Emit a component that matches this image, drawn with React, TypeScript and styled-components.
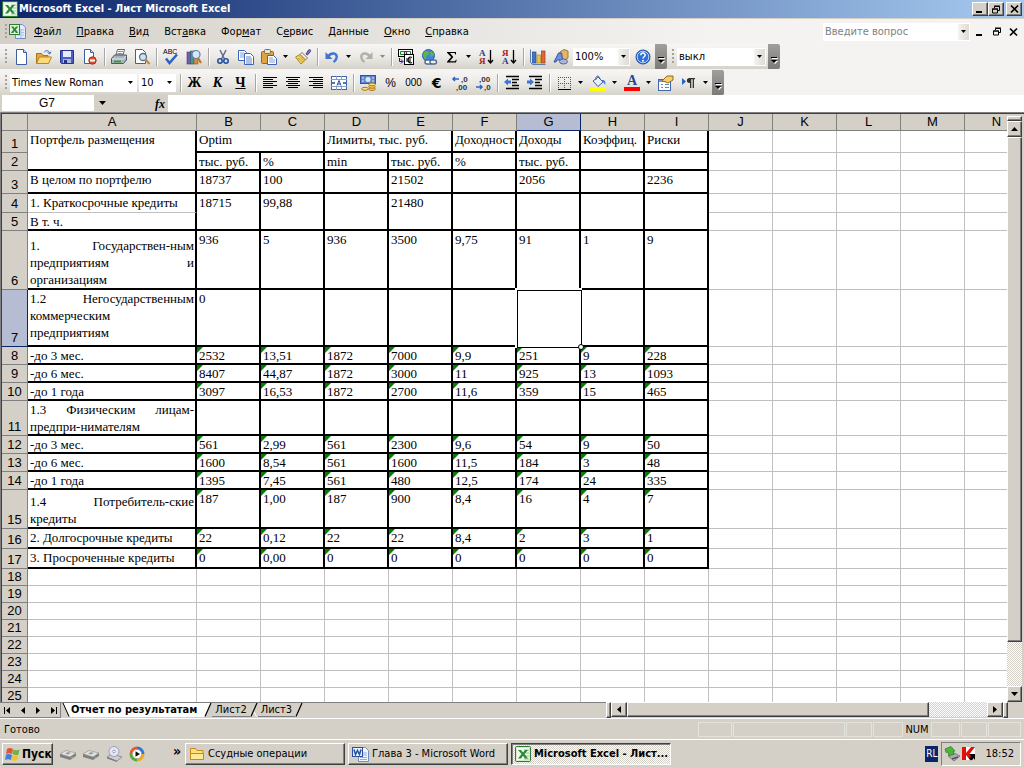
import React from 'react';
import styled, { createGlobalStyle, css } from 'styled-components';

const face = '#d4d0c8';
const shade = '#808080';
const dark = '#404040';
const navy = '#0a246a';
const ui = '"DejaVu Sans Condensed", "DejaVu Sans", sans-serif';

const Global = createGlobalStyle`
  *, *::before, *::after { box-sizing: border-box; }
  body { margin: 0; background: ${face}; }
  button, input, select { font: inherit; color: inherit; margin: 0; border-radius: 0; }
`;

const raised = css`
  border: 1px solid;
  border-color: #fff ${dark} ${dark} #fff;
  box-shadow: inset -1px -1px 0 ${shade};
`;

const dither = css`
  background: conic-gradient(#fff 25%, ${face} 0 50%, #fff 0 75%, ${face} 0) 0 0 / 2px 2px;
`;

const Window = styled.div`
  height: 100vh;
  display: flex;
  flex-direction: column;
  overflow: hidden;
  font: 11px/14px ${ui};
  color: #000;
  background: ${face};
`;

/* title bar */
const TitleBar = styled.header`
  flex: none;
  height: 19px;
  display: flex;
  align-items: center;
  padding: 0 2px;
  border-bottom: 1px solid ${face};
  background: linear-gradient(90deg, ${navy}, #a6caf0);
  color: #fff;
`;
const Title = styled.h1`
  flex: 1;
  margin: 0 0 0 1px;
  font: bold 11px/16px ${ui};
  white-space: nowrap;
`;
const CaptionButton = styled.button<{ $gap?: boolean }>`
  ${raised}
  width: 16px;
  height: 14px;
  padding: 0;
  margin-left: ${(p) => (p.$gap ? '2px' : '0')};
  background: ${face};
  display: grid;
  place-items: center;
  color: #000;
`;

/* menu bar */
const MenuBar = styled.nav`
  flex: none;
  height: 25px;
  display: flex;
  align-items: center;
  padding: 0 2px 0 5px;
  background: linear-gradient(90deg, ${face}, #f4f3f1 70%);
`;
const MenuItems = styled.div`
  flex: 1;
  display: flex;
`;
const MenuItem = styled.button`
  border: 0;
  background: none;
  padding: 0 7px 0 8px;
  line-height: 18px;
  white-space: nowrap;
`;
const DocButton = styled.button`
  border: 0;
  background: none;
  padding: 0;
  width: 17px;
  height: 16px;
  display: grid;
  place-items: center;
`;
const Question = styled.div`
  width: 147px;
  height: 18px;
  display: flex;
  background: #fff;
  margin-right: 1px;
`;
const QuestionInput = styled.input`
  flex: 1;
  min-width: 0;
  border: 0;
  padding: 0 2px;
  background: none;
  outline: 0;
  &::placeholder { color: #808080; opacity: 1; }
`;

/* toolbars */
const Strip = styled.div`
  flex: none;
  display: flex;
  background: #f4f3f1;
`;
const Bar = styled.div`
  height: 25px;
  margin-bottom: 1px;
  padding-left: 5px;
  display: flex;
  align-items: center;
  background: linear-gradient(#f7f6f4, #eceae6 50%, #d5d2ca);
`;
const LowerStrip = styled(Strip)`
  ${Bar} { margin-bottom: 0; }
`;
const Grip = styled.span`
  flex: none;
  width: 3px;
  height: 15px;
  margin-right: 1px;
  background: linear-gradient(#a5a29b 2px, transparent 0) 0 0 / 2px 4px repeat-y;
`;
const toolFonts = {
  bold: css`font: bold 14px/18px 'Liberation Serif', serif;`,
  italic: css`font: italic bold 14px/18px 'Liberation Serif', serif;`,
  under: css`font: bold 14px/18px 'Liberation Serif', serif; text-decoration: underline;`,
  plain: css`font: 12px/18px 'Liberation Sans', sans-serif;`,
  small: css`font: 10px/18px 'Liberation Sans', sans-serif;`,
  euro: css`font: bold 14px/18px 'DejaVu Sans', sans-serif;`,
};
const Tool = styled.button<{ $text?: keyof typeof toolFonts }>`
  flex: none;
  width: 23px;
  height: 22px;
  border: 0;
  padding: 0;
  background: none;
  display: grid;
  place-items: center;
  white-space: nowrap;
  ${(p) => p.$text && toolFonts[p.$text]}
`;
const DropButton = styled.button`
  flex: none;
  width: 11px;
  height: 22px;
  border: 0;
  padding: 0;
  background: none;
  display: grid;
  place-items: center;
`;
const Rule = styled.span`
  flex: none;
  width: 2px;
  height: 18px;
  margin: 0 1px 0 3px;
  border-left: 1px solid #a6a6a6;
  border-right: 1px solid #fff;
`;
const Combo = styled.span<{ $w: number }>`
  flex: none;
  width: ${(p) => p.$w}px;
  height: 18px;
  margin: 0 1px;
  display: flex;
  background: #fff;
`;
const ComboSelect = styled.select`
  flex: 1;
  min-width: 0;
  appearance: none;
  border: 0;
  padding: 0 2px;
  background: none;
  outline: 0;
`;
const ComboArrow = styled.span<{ $flat?: boolean }>`
  width: 11px;
  margin: 1px;
  display: grid;
  place-items: center;
  background: ${(p) => (p.$flat ? '#fff' : 'linear-gradient(90deg, #f4f3f1, #dedbd5)')};
  pointer-events: none;
`;
const Cap = styled.button`
  flex: none;
  align-self: stretch;
  width: 12px;
  margin-left: 1px;
  border: 0;
  padding: 0 0 4px;
  border-radius: 0 2px 2px 0;
  background: linear-gradient(#a09f9d, #7d7b78);
  display: flex;
  align-items: flex-end;
  justify-content: center;
`;

/* formula bar */
const FormulaBar = styled.div`
  flex: none;
  height: 17px;
  display: flex;
  padding-left: 2px;
  background: ${face};
`;
const NameBox = styled.input`
  width: 92px;
  height: 16px;
  border: 0;
  padding: 0 2px 0 0;
  text-align: center;
  font: 12px/16px 'Liberation Sans', sans-serif;
`;
const NameDrop = styled(DropButton)`
  width: 16px;
  height: 16px;
`;
const FxButton = styled.button`
  width: 20px;
  margin-left: 38px;
  border: 0;
  padding: 0 0 0 4px;
  background: none;
  font: italic bold 12px/14px 'Liberation Serif', serif;
`;
const Formula = styled.input`
  flex: 1;
  min-width: 0;
  border: 0;
  padding: 0 2px;
  background: #fff;
`;

/* worksheet */
const SheetArea = styled.main`
  flex: 1;
  min-height: 0;
  display: flex;
  border-top: 1px solid ${shade};
  border-left: 1px solid ${shade};
`;
const Pane = styled.div`
  flex: 1;
  min-width: 0;
  overflow: hidden;
  border-top: 1px solid ${dark};
  border-left: 1px solid ${dark};
  background: #fff;
`;
const Sheet = styled.table`
  table-layout: fixed;
  width: 100%;
  border-collapse: separate;
  border-spacing: 0;
`;
const Col = styled.col<{ $w: number }>`
  width: ${(p) => p.$w}px;
`;
const Row = styled.tr<{ $h: number }>`
  height: ${(p) => p.$h}px;
`;
const Head = styled.th<{ $on?: boolean }>`
  padding: 0;
  border: 0 solid ${(p) => (p.$on ? navy : shade)};
  border-width: 0 1px 1px 0;
  background: ${(p) => (p.$on ? '#b6bdd2' : face)};
  font: 13px/16px 'Liberation Sans', sans-serif;
  text-align: center;
  vertical-align: bottom;
`;
const Cell = styled.td<{ $right: boolean; $bottom: boolean; $low?: boolean; $flag?: boolean }>`
  position: relative;
  padding: 0 1px 0 2px;
  border: 0 solid;
  border-width: 0 ${(p) => (p.$right ? 2 : 1)}px ${(p) => (p.$bottom ? 2 : 1)}px 0;
  border-color: #000 ${(p) => (p.$right ? '#000' : '#c0c0c0')} ${(p) => (p.$bottom ? '#000' : '#c0c0c0')} #000;
  font: 13px/17px 'Liberation Serif', serif;
  vertical-align: ${(p) => (p.$low ? 'bottom' : 'top')};
  ${(p) =>
    p.$flag &&
    css`
      &::before {
        content: '';
        position: absolute;
        left: 0;
        top: 0;
        border: 3px solid;
        border-color: #008000 transparent transparent #008000;
      }
    `}
`;
const Value = styled.div`
  position: relative;
  height: 16px;
  white-space: nowrap;
`;
const Lines = styled.div<{ $low?: boolean }>`
  margin-bottom: ${(p) => (p.$low ? '0' : '-1px')};
`;
const Line = styled.div`
  white-space: nowrap;
  text-align: justify;
  &:not(:last-child) { text-align-last: justify; white-space: normal; }
`;
const Selection = styled.div`
  position: absolute;
  z-index: 1;
  inset: -2px -3px -3px -2px;
  border: 2px solid #fff;
  border-width: 2px 0 0 2px;
  background: #fff;
  &::before {
    content: '';
    position: absolute;
    inset: 0;
    border: 1px solid #000;
  }
  &::after {
    content: '';
    position: absolute;
    right: -2px;
    bottom: -2px;
    width: 6px;
    height: 6px;
    border: 1px solid #000;
    border-radius: 3px;
    background: #fff;
  }
`;

/* scroll bars */
const VScroll = styled.div`
  flex: none;
  width: 17px;
  padding: 2px 2px 0 0;
  display: flex;
  flex-direction: column;
  border-top: 1px solid ${dark};
  background: ${face};
`;
const VSplit = styled.div`
  ${raised}
  height: 5px;
`;
const ScrollButton = styled.button`
  ${raised}
  flex: none;
  width: 15px;
  height: 16px;
  padding: 0;
  background: ${face};
  display: grid;
  place-items: center;
`;
const VTrack = styled.div`
  ${dither}
  flex: 1;
  display: flex;
`;
const VThumb = styled.div`
  ${raised}
  flex: 1;
  height: 92%;
  background: ${face};
`;
const TabRow = styled.div`
  flex: none;
  height: 16px;
  display: flex;
  padding-right: 16px;
  background: ${face};
`;
const TabSide = styled.div`
  flex: 0 1 606px;
  min-width: 320px;
  display: flex;
  border-top: 1px solid ${shade};
`;
const NavButton = styled.button`
  width: 15px;
  border: 0;
  border-bottom: 1px solid ${shade};
  padding: 0;
  background: none;
  display: grid;
  place-items: center;
`;
const NavEnd = styled.span`
  width: 2px;
  border-left: 1px solid ${shade};
`;
const SheetTab = styled.button<{ $on?: boolean }>`
  height: 14px;
  border: 0;
  border-bottom: ${(p) => (p.$on ? '0' : `1px solid ${shade}`)};
  padding: ${(p) => (p.$on ? '0 7px 0 1px' : '0 3px')};
  background: ${(p) => (p.$on ? '#fff' : face)};
  font: ${(p) => (p.$on ? 'bold' : 'normal')} 11px/14px ${ui};
  white-space: nowrap;
`;
const HScroll = styled.div`
  flex: 1;
  display: flex;
`;
const HSplit = styled.div`
  ${raised}
  width: 5px;
`;
const HButton = styled(ScrollButton)`
  width: 16px;
  height: 15px;
`;
const HTrack = styled.div`
  ${dither}
  flex: 1;
  height: 15px;
`;
const HThumb = styled.div`
  ${raised}
  width: 84%;
  height: 15px;
  background: ${face};
`;

/* status bar */
const StatusBar = styled.footer`
  flex: none;
  height: 21px;
  display: flex;
  align-items: center;
  gap: 1px;
  padding: 1px 3px 0 4px;
  border-top: 1px solid #fff;
`;
const StatusText = styled.span`
  flex: 1;
`;
const StatusBox = styled.span<{ $w: number; $plain?: boolean }>`
  width: ${(p) => p.$w}px;
  height: 15px;
  border: 1px solid ${(p) => (p.$plain ? 'transparent' : '#e4e2dd')};
  text-align: center;
  line-height: 14px;
`;

/* taskbar */
const TaskBar = styled.div`
  flex: none;
  height: 29px;
  display: flex;
  align-items: center;
  padding: 0 3px 0 2px;
  border-top: 1px solid #fff;
`;
const TaskButton = styled.button<{ $on?: boolean }>`
  ${raised}
  width: 160px;
  height: 22px;
  margin-right: 3px;
  padding: 0 3px;
  display: flex;
  align-items: center;
  gap: 3px;
  background: ${face};
  white-space: nowrap;
  overflow: hidden;
  ${(p) =>
    p.$on &&
    css`
      ${dither}
      font-weight: bold;
      border-color: ${dark} #fff #fff ${dark};
      box-shadow: inset 1px 1px 0 ${shade};
    `}
`;
const StartButton = styled(TaskButton)`
  width: 51px;
  padding: 0 2px;
  gap: 1px;
  margin-right: 3px;
  font-weight: bold;
  font-size: 12px;
`;
const Quick = styled.div`
  width: 129px;
  display: flex;
`;
const QuickButton = styled.button`
  width: 23px;
  height: 22px;
  border: 0;
  padding: 0;
  background: none;
  display: grid;
  place-items: center;
`;
const More = styled(QuickButton)`
  width: 16px;
  height: 16px;
  margin-left: auto;
  font: bold 14px/12px ${ui};
`;
const Lang = styled.span`
  width: 13px;
  height: 16px;
  margin: 0 3px 0 auto;
  background: ${navy};
  color: #fff;
  line-height: 16px;
  text-align: center;
  white-space: nowrap;
  font-size: 10px;
`;
const Tray = styled.div`
  height: 24px;
  display: flex;
  align-items: center;
  gap: 1px;
  padding: 0 6px 0 2px;
  border: 1px solid;
  border-color: ${shade} #fff #fff ${shade};
`;
const Clock = styled.time`
  margin-left: 7px;
`;

/* drawings */
const Svg = ({ w = 16, h = 16, vb, children }: { w?: number; h?: number; vb?: string; children: React.ReactNode }) => (
  <svg width={w} height={h} viewBox={vb ?? `0 0 ${w} ${h}`} overflow="visible" aria-hidden="true">
    {children}
  </svg>
);
const Tri = ({ dir = 'down', s = 5, c = '#000' }: { dir?: 'down' | 'up' | 'left' | 'right'; s?: number; c?: string }) => {
  const d = {
    down: 'M0 0h7L3.500 4z',
    up: 'M0 4h7L3.500 0z',
    left: 'M4 0v7L0 3.500z',
    right: 'M0 0v7L4 3.500z',
  }[dir];
  const flat = dir === 'down' || dir === 'up';
  const t = s > 5 ? 4 : 3;
  return (
    <svg width={flat ? s : t} height={flat ? t : s} viewBox={flat ? '0 0 7 4' : '0 0 4 7'} preserveAspectRatio="none" aria-hidden="true">
      <path d={d} fill={c} />
    </svg>
  );
};
const IMin = () => <Svg w={10} h={8}><path d="M1 6h6v2H1z" /></Svg>;
const IRestore = () => (
  <Svg w={10} h={9}>
    <path d="M3.500 3V1.500h5v4H7M3 1h6" fill="none" stroke="#000" />
    <path d="M1.500 4v4h5V4zM1 4h6" fill="none" stroke="#000" />
  </Svg>
);
const IClose = () => <Svg w={9} h={8}><path d="M1 .5l7 7M8 .5l-7 7" stroke="#000" strokeWidth="1.700" /></Svg>;

const IExcel = () => (
  <Svg>
    <rect x=".5" y=".5" width="15" height="15" rx="1" fill="#d3ebcd" stroke="#2f7d32" />
    <path d="M2 2h12v12H2z" fill="#f4fbf2" />
    <path d="M9 4h5M9 7h5M9 10h5M9 13h5" stroke="#8fc58d" />
    <path d="M3 4h3l2 2.500L10 4h3L9.500 8l3.500 4.500h-3L8 9.800 6 12.500H3L6.500 8z" fill="#2b8a35" />
  </Svg>
);
const IExcelDoc = () => (
  <Svg w={17} h={17}>
    <path d="M6.500 1.500h7l3 3v11h-10z" fill="#e3ecfb" stroke="#6f8fc4" />
    <path d="M8 7h7M8 9.500h7M8 12h7M12 6v9" stroke="#a9bfe4" />
    <rect x=".5" y="1.500" width="10" height="10" fill="#dff0da" stroke="#2f7d32" />
    <path d="M2 3.500h2.500L5.700 5.300 7 3.500h2.300L6.900 6.600 9.300 10H6.900L5.600 8 4.300 10H1.900l2.500-3.400z" fill="#2b8a35" />
  </Svg>
);
const INew = () => <Svg><path d="M3.500.5h7l3 3v12h-10z" fill="#fff" stroke="#3c5f9e" /><path d="M10.500.5v3h3" fill="#c9d9f2" stroke="#3c5f9e" /></Svg>;
const IOpen = () => (
  <Svg>
    <path d="M.5 14.500v-10h5l1.500 2h5v8z" fill="#e0a93c" stroke="#a8761a" />
    <path d="M.5 14.500l3-6.500h12l-3 6.500z" fill="#ffd97a" stroke="#b5852a" />
    <path d="M8 3.500c2-3 5-2 5.500.5m-2-.5l2.200 1.500L15 2.700" fill="none" stroke="#3a66b0" />
  </Svg>
);
const ISave = () => (
  <Svg>
    <path d="M1.500 1.500h13v13h-12l-1-1z" fill="#4a5fc4" stroke="#27338a" />
    <path d="M4 2h8v6H4z" fill="#e6ecfb" />
    <path d="M4 10h8v4H4z" fill="#aeb6dc" />
    <path d="M5 11h3v3H5z" fill="#27338a" />
  </Svg>
);
const IPerm = () => (
  <Svg>
    <path d="M2.500.5h6l3 3v11h-9z" fill="#fff" stroke="#3c5f9e" />
    <path d="M8.500.5v3h3" fill="#c9d9f2" stroke="#3c5f9e" />
    <circle cx="10.500" cy="11.500" r="3.700" fill="#e2502c" stroke="#b02a10" />
    <path d="M8 10.500h5v2H8z" fill="#fff" />
  </Svg>
);
const IPrint = () => (
  <Svg>
    <path d="M5 6l1.500-5.500h7L12 6z" fill="#fff" stroke="#667" />
    <path d="M7 2.500h5M6.500 4.500h5" stroke="#88a" />
    <path d="M.5 9.500L3.500 6h12v5l-3 3.500H.5z" fill="#a9b3bd" stroke="#4d5964" />
    <path d="M1 10h11.500L15 7" fill="none" stroke="#e4e8ec" />
    <path d="M3 12.500h7" stroke="#3a9b3a" strokeWidth="2" />
  </Svg>
);
const IPreview = () => (
  <Svg>
    <path d="M1.500.5h7l3 3v11h-10z" fill="#fff" stroke="#3c5f9e" />
    <circle cx="9" cy="8" r="3.500" fill="#cfe3f7" stroke="#5f6d80" strokeWidth="1.300" />
    <path d="M11.500 10.500l4 4.500" stroke="#c28a3a" strokeWidth="2.200" />
  </Svg>
);
const ISpell = () => (
  <Svg>
    <text x="0" y="5" fontSize="7" fontFamily="Liberation Sans, sans-serif">ABC</text>
    <path d="M3 9.500l3.500 4.500L14 5.500" fill="none" stroke="#2f62c0" strokeWidth="2.500" />
  </Svg>
);
const IBooks = () => (
  <Svg>
    <rect x="1" y="3" width="3.500" height="12" fill="#7a57b8" stroke="#4a3480" strokeWidth=".6" />
    <rect x="4.500" y="2" width="3.500" height="13" fill="#3f9a8f" stroke="#23625a" strokeWidth=".6" />
    <rect x="8" y="3" width="4" height="12" fill="#d98b3a" stroke="#97571a" strokeWidth=".6" />
    <circle cx="10" cy="5.500" r="4" fill="#d5e8fa" stroke="#5f7da8" strokeWidth="1.200" />
    <path d="M12 9l3 5" stroke="#b8752c" strokeWidth="2.200" />
  </Svg>
);
const ICut = () => (
  <Svg>
    <path d="M5 1l4.500 9M11 1L6.500 10" stroke="#5d6f8c" strokeWidth="1.500" />
    <circle cx="5" cy="12" r="2.200" fill="none" stroke="#2450a4" strokeWidth="1.600" />
    <circle cx="11" cy="12" r="2.200" fill="none" stroke="#2450a4" strokeWidth="1.600" />
  </Svg>
);
const ICopy = () => (
  <Svg>
    <path d="M.5 1.500h6l2 2v8h-8z" fill="#fff" stroke="#3b64b5" />
    <path d="M2 4h4M2 6h5M2 8h5" stroke="#7f9fd8" />
    <path d="M6.500 4.500h6l3 3v8h-9z" fill="#fff" stroke="#3b64b5" />
    <path d="M8 8h5M8 10h6M8 12h6M8 14h6" stroke="#5a84cc" />
  </Svg>
);
const IPaste = () => (
  <Svg>
    <rect x=".5" y="2.500" width="12" height="12" rx="1" fill="#dda445" stroke="#99671a" />
    <rect x="3.500" y=".5" width="6" height="4" rx="1" fill="#e9e4d6" stroke="#77705c" />
    <path d="M6.500 6.500h6l3 3v6h-9z" fill="#fff" stroke="#3b64b5" />
    <path d="M8 9h4M8 11h6M8 13h6" stroke="#7f9fd8" />
  </Svg>
);
const IBrush = () => (
  <Svg>
    <path d="M11 5l2.500-4c1.500-1 2.500 0 2 1.500L12.500 6z" fill="#7f6fc0" stroke="#4f4488" />
    <path d="M7 3.500L12.500 9l-2 2-5.500-5.500z" fill="#f0ead8" stroke="#837b62" />
    <path d="M5 5.500L.5 8 6 15l4.500-4z" fill="#f1d56a" stroke="#a88a22" />
    <path d="M3 9l5 4M4.500 7.500l4.500 4" stroke="#c4a23a" />
  </Svg>
);
const IUndo = () => <Svg><path d="M4 8C7 2.500 14 4 12.500 9c-.5 2-2 3.500-3 4" fill="none" stroke="#3f74d0" strokeWidth="2.500" /><path d="M1.500 3v7h7z" fill="#3f74d0" /></Svg>;
const IRedo = () => <Svg><path d="M12 8C9 2.500 2 4 3.500 9c.5 2 2 3.500 3 4" fill="none" stroke="#b3b0aa" strokeWidth="2.500" /><path d="M14.500 3v7h-7z" fill="#b3b0aa" /></Svg>;
const IEuro = () => (
  <Svg>
    <rect x=".5" y=".5" width="14" height="7" fill="#fff" stroke="#000" />
    <path d="M2.500 2.500h10v3h-10z" fill="none" stroke="#118a22" />
    <circle cx="7.500" cy="4" r="1.300" fill="#fff" stroke="#000" strokeWidth=".8" />
    <rect x="6.500" y="5.500" width="9" height="10" fill="#fff" stroke="#000" />
    <path d="M14 8.500c-4-2.500-6 5-1 5.500l1-.5M8 10h5M8 12h5" fill="none" stroke="#000" strokeWidth="1.200" />
    <path d="M1.500 9v3.500h3M3 10.500l2 2-2 2" fill="none" stroke="#1111c0" />
  </Svg>
);
const IGlobe = () => (
  <Svg>
    <circle cx="7.500" cy="6.500" r="6" fill="#3f86d8" stroke="#2a5fa8" />
    <path d="M3 3c2-2 5-1 5 1S5 6 5 9 2 8 2 6zM9 3c2-1 4 1 4 3l-3 2z" fill="#5fb548" />
    <rect x="4" y="11" width="7" height="4" rx="2" fill="#fff" stroke="#4d6a94" strokeWidth="1.400" />
    <rect x="9" y="11" width="6.500" height="4" rx="2" fill="#e8eef8" stroke="#4d6a94" strokeWidth="1.400" />
  </Svg>
);
const ISum = () => <Svg><path d="M3 3h9v2.500h-.8L10.600 4H6l3.300 4-3.600 4.300h5.400l.8-1.600h.8L12 13.500H3v-.7L7.200 8 3 3.700z" /></Svg>;
const ISort = ({ flip }: { flip?: boolean }) => (
  <Svg>
    <g fontFamily="Liberation Serif, serif" fontWeight="bold" fontSize="9">
      <text x="1" y="7" fill={flip ? '#a02020' : '#1b3f94'}>{flip ? 'Я' : 'А'}</text>
      <text x="1" y="15" fill={flip ? '#1b3f94' : '#a02020'}>{flip ? 'А' : 'Я'}</text>
    </g>
    <path d="M12.500 1v13M10 11l2.500 3 2.500-3" fill="none" stroke="#000" strokeWidth="1.300" />
  </Svg>
);
const IChart = () => (
  <Svg>
    <path d="M.5.5v13l2 2h13" fill="none" stroke="#5f7da8" />
    <rect x="2.500" y="3" width="3.500" height="11" fill="#3f74d0" stroke="#234a94" strokeWidth=".7" />
    <rect x="7" y="6" width="3.500" height="8" fill="#f2c63a" stroke="#a8861a" strokeWidth=".7" />
    <rect x="11.500" y="2" width="3.500" height="12" fill="#e0663a" stroke="#9a3a1a" strokeWidth=".7" />
  </Svg>
);
const IDraw = () => (
  <Svg>
    <path d="M7 3l4-2.500L15 2v7l-4 2.500L7 9z" fill="#e3b566" stroke="#a07a34" />
    <path d="M1 13L5.500 4h3L10 13H7.500L7 11H4l-1 2z" fill="#6f8fe0" stroke="#3552a8" />
    <ellipse cx="10.500" cy="12.500" rx="4" ry="2.500" fill="#a9b6dc" stroke="#5666a0" />
  </Svg>
);
const IHelp = () => (
  <Svg>
    <circle cx="8" cy="8" r="7" fill="#2f6fd6" stroke="#1c4aa0" />
    <circle cx="8" cy="8" r="5.800" fill="none" stroke="#bcd6fa" />
    <path d="M5.800 6.200c.2-3 4.600-2.600 4.400 0C10 7.800 8 7.800 8 9.600" fill="none" stroke="#fff" strokeWidth="1.500" />
    <circle cx="8" cy="11.700" r="1" fill="#fff" />
  </Svg>
);
const IAlign = ({ kind }: { kind: 'l' | 'c' | 'r' }) => {
  const x = { l: 1, c: 3, r: 5 }[kind];
  return (
    <Svg>
      <path d={`M1 2.500h14M${x} 4.500h10M1 6.500h14M${x} 8.500h10M1 10.500h14M${x} 12.500h10`} stroke="#000" />
    </Svg>
  );
};
const IMerge = () => (
  <Svg>
    <rect x=".5" y="1.500" width="15" height="13" fill="#fff" stroke="#3f66ac" />
    <path d="M0 4.500h16M0 11.500h16M5.500 1v3.500M10.500 1v3.500M5.500 11.500V15M10.500 11.500V15" stroke="#7f9fd0" />
    <path d="M1 8h3M15 8h-3" stroke="#234a94" strokeWidth="1.400" />
    <path d="M6 10.500l2-5 2 5M7 9h2" fill="none" stroke="#234a94" />
  </Svg>
);
const IMoney = () => (
  <Svg>
    <rect x=".5" y=".5" width="15" height="8" fill="#5f86d0" stroke="#2f56a4" />
    <circle cx="8" cy="4.500" r="2.500" fill="#dbe7fb" />
    <path d="M2 3h2M12 3h2M2 6h2M12 6h2" stroke="#dbe7fb" />
    <ellipse cx="12" cy="14" rx="3.300" ry="1.500" fill="#f7cf62" stroke="#a8761a" />
    <ellipse cx="12" cy="11.700" rx="3.300" ry="1.500" fill="#f7cf62" stroke="#a8761a" />
    <ellipse cx="12" cy="9.400" rx="3.300" ry="1.500" fill="#fbe08a" stroke="#a8761a" />
    <ellipse cx="5" cy="13.800" rx="3.300" ry="1.500" fill="#fbe08a" stroke="#a8761a" />
  </Svg>
);
const IDecimal = ({ less }: { less?: boolean }) => (
  <Svg>
    <g fontFamily="Liberation Sans, sans-serif" fontSize="8" fontWeight="bold" fill="#333">
      <text x={less ? 4 : 9} y="7">{less ? ',00' : ',0'}</text>
      <text x={less ? 9 : 4} y="15">{less ? ',0' : ',00'}</text>
    </g>
    <path d={less ? 'M1 12h6M5 10l2 2-2 2' : 'M1 4h6M3 2L1 4l2 2'} fill="none" stroke="#2f62c0" strokeWidth="1.500" />
  </Svg>
);
const IIndent = ({ out }: { out?: boolean }) => (
  <Svg>
    <path d="M2 1.500h13M8 4.500h7M8 7.500h5M8 10.500h7M2 13.500h13" stroke="#000" strokeWidth="1.300" />
    <path d={out ? 'M0 7l4-3.500v2h3v3H4v2z' : 'M7 7L3 3.500v2H0v3h3v2z'} fill="#3f74d0" />
  </Svg>
);
const IBorders = () => (
  <Svg>
    <path d="M2 2.500h13M2 8.500h13M2.500 2v12M8.500 2v12M14.500 2v12" stroke="#555" strokeDasharray="1 1" />
    <path d="M2 14.500h13" stroke="#000" />
  </Svg>
);
const IFill = () => (
  <Svg>
    <path d="M3 6l5-4 5 5-5 4.500z" fill="#e9eef8" stroke="#3f5f96" />
    <path d="M6 5c-1-4 3-6 4-1" fill="none" stroke="#3f5f96" />
    <path d="M12 5c3 0 4 2 3 5-1-2-1-3-3-3z" fill="#3f74d0" />
    <path d="M0 12h16v4H0z" fill="#ff0" />
  </Svg>
);
const IColor = () => (
  <Svg>
    <text x="3" y="10" fontFamily="Liberation Serif, serif" fontWeight="bold" fontSize="14" fill="#234a94">A</text>
    <path d="M0 12h16v4H0z" fill="red" />
  </Svg>
);
const IProps = () => (
  <Svg>
    <rect x=".5" y="4.500" width="12" height="11" fill="#fff" stroke="#3f66ac" />
    <path d="M1 5h11v2H1z" fill="#6f96dc" />
    <path d="M3 9.500h2M7 9.500h4M3 12.500h2M7 12.500h4" stroke="#5f86c8" />
    <path d="M4 6l5-5 6 0v4l-5 3-2-1z" fill="#f3cf6a" stroke="#94691c" />
  </Svg>
);
const IPara = () => (
  <Svg>
    <path d="M1 3v7l4-3.500z" fill="#2f62c0" />
    <path d="M8.500 8C5 8 5 3 8.500 3H14v1.200h-1V13h-1.300V4.200h-1.400V13H9V8z" fill="#333" />
  </Svg>
);
const ICap = () => (
  <Svg w={7} h={8}>
    <path d="M1 1h6v1H1zM1 4h6L4 7z" fill="#fff" />
    <path d="M0 0h6v1H0zM0 3h6L3 6z" fill="#000" />
  </Svg>
);
const INav = ({ dir, end }: { dir: 'left' | 'right'; end?: boolean }) => (
  <Svg w={8} h={7}>
    <path d={dir === 'left' ? 'M6 0v7L2 3.500z' : 'M2 0v7l4-3.500z'} />
    {end && <path d={dir === 'left' ? 'M0 0h1v7H0z' : 'M7 0h1v7H7z'} />}
  </Svg>
);
const Slant = ({ kind }: { kind: 'open' | 'split' | 'end' | 'mid' }) => (
  <Svg w={8} h={14} vb="0 0 8 14">
    {kind === 'open' && <><path d="M1 0h7v14z" fill="#fff" /><path d="M1 0l6 13.500" stroke="#000" /></>}
    {kind === 'split' && <path d="M0 0h7L1 14H0z" fill="#fff" />}
    {kind === 'mid' && <path d="M3.500 8l3 5.500" stroke="#fff" />}
    {kind !== 'open' && <path d="M7 0L1 13.500" stroke="#000" strokeWidth="1.200" />}
  </Svg>
);
const IFlag = () => (
  <Svg>
    <path d="M2 3c2-1.500 4-1 6 0L7 8C5 7 3 7 1 8z" fill="#e5552c" />
    <path d="M8.500 3.500c2 1 4 1 6 0l-1 5c-2 1-4 .5-6-.5z" fill="#6cb33f" />
    <path d="M1 8.700c2-1 4-.8 6 .3l-1 5c-2-1-4-1-6 0z" fill="#3f7fe0" />
    <path d="M7.500 9c2 1 4 1 6 0l-1 5c-2 1-4 1-6 0z" fill="#f5c22c" />
  </Svg>
);
const IDrive = () => (
  <Svg>
    <path d="M0 8l6-3.500L16 7l-6 4z" fill="#e2e2e2" stroke="#8a8a8a" strokeWidth=".6" />
    <path d="M0 8l10 3v3L0 11zM10 11l6-4v3l-6 4z" fill="#808080" />
    <path d="M5 7.500l3-1.500 3 1-3 1.500z" fill="#9a9a9a" />
    <circle cx="12" cy="11.200" r=".8" fill="#5fd05f" />
  </Svg>
);
const IDisc = () => (
  <Svg>
    <path d="M1 11l5-3 10 3-5 4z" fill="#d0d0d0" stroke="#777" strokeWidth=".7" />
    <path d="M1 11l10 4v1L1 12.500z" fill="#777" />
    <circle cx="8" cy="5.500" r="5" fill="#e4e6f6" stroke="#8a8fb0" strokeWidth=".8" />
    <circle cx="8" cy="5.500" r="1.300" fill="#fff" stroke="#8a8fb0" strokeWidth=".8" />
  </Svg>
);
const IPlayer = () => (
  <Svg>
    <path d="M8 .5A7.500 7.500 0 0 0 .5 8H8z" fill="#e85c2c" />
    <path d="M8 .5A7.500 7.500 0 0 1 15.500 8H8z" fill="#2f74d8" />
    <path d="M15.500 8A7.500 7.500 0 0 1 8 15.500V8z" fill="#f2a81c" />
    <path d="M8 15.500A7.500 7.500 0 0 1 .5 8H8z" fill="#57ab3a" />
    <circle cx="8" cy="8" r="4.600" fill="#fff" stroke="#999" strokeWidth=".6" />
    <path d="M6.500 5.200v5.600L11 8z" fill="#111" />
  </Svg>
);
const IFolder = () => (
  <Svg>
    <path d="M1.500 13.500v-11h5l1.500 2h6v9z" fill="#ffe07a" stroke="#c08a1c" />
    <path d="M1.500 13.500v-6h13v6z" fill="#ffe892" stroke="#c08a1c" />
  </Svg>
);
const IWord = () => (
  <Svg w={17} h={17}>
    <path d="M6.500 1.500h7l3 3v11h-10z" fill="#f2f7ff" stroke="#6f8fc4" />
    <path d="M11 7h4M11 9h4M8 11.500h7M8 13.500h7" stroke="#8fabdc" />
    <rect x=".5" y="1.500" width="10" height="9" fill="#e6eefc" stroke="#2a50a0" />
    <path d="M2 3.500l1.500 5 2-4 2 4 1.500-5" fill="none" stroke="#2a50a0" strokeWidth="1.500" />
  </Svg>
);
const IEject = () => (
  <Svg>
    <path d="M4 10l6-3 6 3-6 5z" fill="#a8aeb8" stroke="#666" strokeWidth=".7" />
    <path d="M8 13l6-2" stroke="#555" strokeWidth="1.500" />
    <path d="M1 3l6-2.500L11 5l-2 .5 1 3-5 1-1-3.500-2 .5z" fill="#4cb53a" stroke="#267a1c" strokeWidth=".7" />
  </Svg>
);
const IKasper = () => (
  <Svg>
    <path d="M1 1h13v13H1z" fill="#fff" />
    <path d="M1 1h4v6l5-6h4L8.500 8l4 6H9L5 9v5H1z" fill="#e01010" />
    <path d="M8 8l6 0v6l-1.700-1.700L10 14.500 8 12l2-1.700z" fill="#000" />
  </Svg>
);

/* data */
type CellData = { v?: string; lines?: string[]; low?: boolean; col?: number; row?: number; soft?: boolean };
type RowData = { h: number; a: CellData | null; cells: (string | CellData | null)[]; flag?: boolean };
const e = '';
const rows: RowData[] = [
  {
    h: 22,
    a: { v: 'Портфель размещения', row: 2 },
    cells: [{ v: 'Optim', col: 2 }, null, { v: 'Лимиты, тыс. руб.', col: 2 }, null, 'Доходност', 'Доходы', 'Коэффиц.', 'Риски'],
  },
  { h: 18, a: null, cells: ['тыс. руб.', '%', 'min', 'тыс. руб.', '%', 'тыс. руб.', e, e] },
  { h: 23, a: { v: 'В целом по портфелю' }, cells: ['18737', '100', e, '21502', e, '2056', e, '2236'] },
  {
    h: 19,
    a: { v: '1. Краткосрочные кредиты', soft: true },
    cells: ['18715', '99,88', e, '21480', e, e, e, e].map((v) => ({ v, row: 2 })),
  },
  { h: 18, a: { v: 'В т. ч.' }, cells: [null, null, null, null, null, null, null, null] },
  {
    h: 59,
    a: { lines: ['1. Государствен-ным', 'предприятиям и', 'организациям'], low: true },
    cells: ['936', '5', '936', '3500', '9,75', '91', '1', '9'],
  },
  { h: 57, a: { lines: ['1.2 Негосударственным', 'коммерческим', 'предприятиям'] }, cells: ['0', e, e, e, e, e, e, e] },
  { h: 18, flag: true, a: { v: '-до 3 мес.' }, cells: ['2532', '13,51', '1872', '7000', '9,9', '251', '9', '228'] },
  { h: 18, flag: true, a: { v: '-до 6 мес.' }, cells: ['8407', '44,87', '1872', '3000', '11', '925', '13', '1093'] },
  { h: 18, flag: true, a: { v: '-до 1 года' }, cells: ['3097', '16,53', '1872', '2700', '11,6', '359', '15', '465'] },
  { h: 35, a: { lines: ['1.3 Физическим лицам-', 'предпри-нимателям'] }, cells: [e, e, e, e, e, e, e, e] },
  { h: 18, flag: true, a: { v: '-до 3 мес.' }, cells: ['561', '2,99', '561', '2300', '9,6', '54', '9', '50'] },
  { h: 18, flag: true, a: { v: '-до 6 мес.' }, cells: ['1600', '8,54', '561', '1600', '11,5', '184', '3', '48'] },
  { h: 18, flag: true, a: { v: '-до 1 года' }, cells: ['1395', '7,45', '561', '480', '12,5', '174', '24', '335'] },
  {
    h: 39,
    flag: true,
    a: { lines: ['1.4 Потребитель-ские', 'кредиты'], low: true },
    cells: ['187', '1,00', '187', '900', '8,4', '16', '4', '7'],
  },
  { h: 20, flag: true, a: { v: '2. Долгосрочные кредиты' }, cells: ['22', '0,12', '22', '22', '8,4', '2', '3', '1'] },
  { h: 20, flag: true, a: { v: '3. Просроченные кредиты' }, cells: ['0', '0,00', '0', '0', '0', '0', '0', '0'] },
];
const letters = 'ABCDEFGHIJKLMN'.split('');
const blankRows = Array.from({ length: 8 }, (_, i) => i + 18);
const menus: [string, string, string][] = [
  ['', 'Ф', 'айл'], ['', 'П', 'равка'], ['', 'В', 'ид'], ['Вст', 'а', 'вка'], ['Фор', 'м', 'ат'],
  ['С', 'е', 'рвис'], ['', 'Д', 'анные'], ['', 'О', 'кно'], ['', 'С', 'правка'],
];

const T = ({ name, children }: { name: string; children: React.ReactNode }) => <Tool aria-label={name}>{children}</Tool>;
const Drop = ({ c }: { c?: string }) => <DropButton aria-label="Ещё"><Tri c={c} /></DropButton>;
const Pick = ({ name, w, value, flat }: { name: string; w: number; value: string; flat?: boolean }) => (
  <Combo $w={w}>
    <ComboSelect aria-label={name} defaultValue={value}><option>{value}</option></ComboSelect>
    <ComboArrow $flat={flat}><Tri /></ComboArrow>
  </Combo>
);

const DataRow = ({ data, n }: { data: RowData; n: number }) => (
  <Row $h={data.h}>
    <Head scope="row" $on={n === 7}>{n}</Head>
    {data.a && (
      <Cell $right $bottom={!data.a.soft} $low={data.a.low} rowSpan={data.a.row}>
        {data.a.lines ? (
          <Lines $low={data.a.low}>{data.a.lines.map((l) => <Line key={l}>{l}</Line>)}</Lines>
        ) : (
          <Value>{data.a.v}</Value>
        )}
      </Cell>
    )}
    {data.cells.map((c, i) => {
      if (c === null) return null;
      const d: CellData = typeof c === 'string' ? { v: c } : c;
      return (
        <Cell key={i} $right $bottom $flag={data.flag} colSpan={d.col} rowSpan={d.row}>
          <Value>{d.v}</Value>
          {n === 7 && i === 5 && <Selection />}
        </Cell>
      );
    })}
    {letters.slice(9).map((l) => <Cell key={l} $right={false} $bottom={false} />)}
  </Row>
);

export default function App() {
  return (
    <Window>
      <Global />
      <TitleBar>
        <IExcel />
        <Title>Microsoft Excel - Лист Microsoft Excel</Title>
        <CaptionButton aria-label="Свернуть"><IMin /></CaptionButton>
        <CaptionButton aria-label="Восстановить"><IRestore /></CaptionButton>
        <CaptionButton aria-label="Закрыть" $gap><IClose /></CaptionButton>
      </TitleBar>
      <MenuBar>
        <Grip />
        <IExcelDoc />
        <MenuItems>
          {menus.map(([a, u, b]) => <MenuItem key={a + u + b}>{a}<u>{u}</u>{b}</MenuItem>)}
        </MenuItems>
        <Question>
          <QuestionInput aria-label="Введите вопрос" placeholder="Введите вопрос" />
          <ComboArrow><Tri /></ComboArrow>
        </Question>
        <DocButton aria-label="Свернуть окно"><IMin /></DocButton>
        <DocButton aria-label="Восстановить окно"><IRestore /></DocButton>
        <DocButton aria-label="Закрыть окно"><IClose /></DocButton>
      </MenuBar>
      <Strip>
        <Bar>
          <Grip />
          <T name="Создать"><INew /></T>
          <T name="Открыть"><IOpen /></T>
          <T name="Сохранить"><ISave /></T>
          <T name="Разрешения"><IPerm /></T>
          <Rule />
          <T name="Печать"><IPrint /></T>
          <T name="Просмотр"><IPreview /></T>
          <Rule />
          <T name="Орфография"><ISpell /></T>
          <T name="Справочные материалы"><IBooks /></T>
          <Rule />
          <T name="Вырезать"><ICut /></T>
          <T name="Копировать"><ICopy /></T>
          <T name="Вставить"><IPaste /></T>
          <Drop />
          <T name="Формат по образцу"><IBrush /></T>
          <Rule />
          <T name="Отменить"><IUndo /></T>
          <Drop />
          <T name="Вернуть"><IRedo /></T>
          <Drop c="#8d8a84" />
          <Rule />
          <T name="Пересчет в евро"><IEuro /></T>
          <T name="Гиперссылка"><IGlobe /></T>
          <T name="Автосумма"><ISum /></T>
          <Drop />
          <T name="По возрастанию"><ISort /></T>
          <T name="По убыванию"><ISort flip /></T>
          <Rule />
          <T name="Мастер диаграмм"><IChart /></T>
          <T name="Рисование"><IDraw /></T>
          <Pick name="Масштаб" w={57} value="100%" />
          <T name="Справка"><IHelp /></T>
          <Cap aria-label="Параметры панели"><ICap /></Cap>
        </Bar>
        <Bar>
          <Grip />
          <Pick name="Режим" w={89} value="выкл" />
          <Cap aria-label="Параметры панели"><ICap /></Cap>
        </Bar>
      </Strip>
      <LowerStrip>
        <Bar>
          <Grip />
          <Pick name="Шрифт" w={127} value="Times New Roman" flat />
          <Pick name="Размер" w={37} value="10" flat />
          <Rule />
          <Tool $text="bold">Ж</Tool>
          <Tool $text="italic">К</Tool>
          <Tool $text="under">Ч</Tool>
          <Rule />
          <T name="По левому краю"><IAlign kind="l" /></T>
          <T name="По центру"><IAlign kind="c" /></T>
          <T name="По правому краю"><IAlign kind="r" /></T>
          <T name="Объединить"><IMerge /></T>
          <Rule />
          <T name="Денежный формат"><IMoney /></T>
          <Tool $text="plain">%</Tool>
          <Tool $text="small">000</Tool>
          <Tool $text="euro">€</Tool>
          <T name="Увеличить разрядность"><IDecimal /></T>
          <T name="Уменьшить разрядность"><IDecimal less /></T>
          <Rule />
          <T name="Уменьшить отступ"><IIndent out /></T>
          <T name="Увеличить отступ"><IIndent /></T>
          <Rule />
          <T name="Границы"><IBorders /></T>
          <Drop />
          <T name="Цвет заливки"><IFill /></T>
          <Drop />
          <T name="Цвет шрифта"><IColor /></T>
          <Drop />
          <T name="Свойства"><IProps /></T>
          <T name="Направление"><IPara /></T>
          <Drop />
          <Cap aria-label="Параметры панели"><ICap /></Cap>
        </Bar>
      </LowerStrip>
      <FormulaBar>
        <NameBox aria-label="Имя" defaultValue="G7" />
        <NameDrop aria-label="Список имен"><Tri s={7} /></NameDrop>
        <FxButton>fx</FxButton>
        <Formula aria-label="Строка формул" />
      </FormulaBar>
      <SheetArea>
        <Pane>
          <Sheet>
            <colgroup>
              <Col $w={26} />
              {letters.map((l) => <Col key={l} $w={l === 'A' ? 169 : 64} />)}
            </colgroup>
            <thead>
              <Row $h={17}>
                <Head aria-label="Выделить все" />
                {letters.map((l) => <Head key={l} scope="col" $on={l === 'G'}>{l}</Head>)}
              </Row>
            </thead>
            <tbody>
              {rows.map((r, i) => <DataRow key={i} data={r} n={i + 1} />)}
              {blankRows.map((n) => (
                <Row key={n} $h={17}>
                  <Head scope="row">{n}</Head>
                  {letters.map((l) => <Cell key={l} $right={false} $bottom={false} />)}
                </Row>
              ))}
            </tbody>
          </Sheet>
        </Pane>
        <VScroll>
          <VSplit />
          <ScrollButton aria-label="Вверх"><Tri dir="up" s={7} /></ScrollButton>
          <VTrack><VThumb /></VTrack>
          <ScrollButton aria-label="Вниз"><Tri s={7} /></ScrollButton>
        </VScroll>
      </SheetArea>
      <TabRow>
        <TabSide>
          <NavButton aria-label="Первый лист"><INav dir="left" end /></NavButton>
          <NavButton aria-label="Предыдущий лист"><INav dir="left" /></NavButton>
          <NavButton aria-label="Следующий лист"><INav dir="right" /></NavButton>
          <NavButton aria-label="Последний лист"><INav dir="right" end /></NavButton>
          <NavEnd />
          <Slant kind="open" />
          <SheetTab $on>Отчет по результатам</SheetTab>
          <Slant kind="split" />
          <SheetTab>Лист2</SheetTab>
          <Slant kind="mid" />
          <SheetTab>Лист3</SheetTab>
          <Slant kind="end" />
        </TabSide>
        <HScroll>
          <HSplit />
          <HButton aria-label="Влево"><Tri dir="left" s={7} /></HButton>
          <HTrack><HThumb /></HTrack>
          <HButton aria-label="Вправо"><Tri dir="right" s={7} /></HButton>
          <HSplit />
        </HScroll>
      </TabRow>
      <StatusBar>
        <StatusText>Готово</StatusText>
        <StatusBox $w={34} />
        <StatusBox $w={112} />
        <StatusBox $w={26} />
        <StatusBox $w={30} />
        <StatusBox $w={26} $plain>NUM</StatusBox>
        <StatusBox $w={29} />
        <StatusBox $w={26} />
        <StatusBox $w={33} />
      </StatusBar>
      <TaskBar>
        <StartButton><IFlag />Пуск</StartButton>
        <Quick>
          <QuickButton aria-label="Диск C"><IDrive /></QuickButton>
          <QuickButton aria-label="Диск D"><IDrive /></QuickButton>
          <QuickButton aria-label="Дисковод"><IDisc /></QuickButton>
          <QuickButton aria-label="Проигрыватель"><IPlayer /></QuickButton>
          <More>»</More>
        </Quick>
        <TaskButton><IFolder />Ссудные операции</TaskButton>
        <TaskButton><IWord />Глава 3 - Microsoft Word</TaskButton>
        <TaskButton $on><IExcel />Microsoft Excel - Лист...</TaskButton>
        <Lang>RL</Lang>
        <Tray>
          <IEject />
          <IKasper />
          <Clock>18:52</Clock>
        </Tray>
      </TaskBar>
    </Window>
  );
}
